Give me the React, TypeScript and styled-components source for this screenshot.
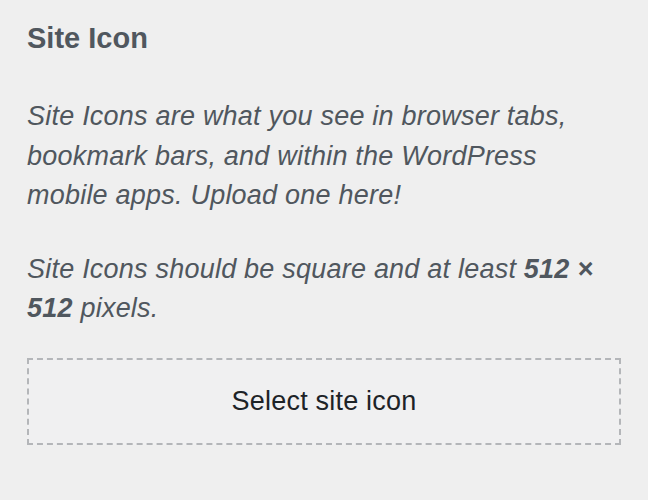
import React from "react";
import styled, { createGlobalStyle } from "styled-components";

const GlobalStyle = createGlobalStyle`
  html, body {
    margin: 0;
    padding: 0;
    background: #efefef;
  }
  body {
    font-family: "Liberation Sans", Arial, sans-serif;
  }
`;

const Panel = styled.div`
  width: 648px;
  height: 500px;
  box-sizing: border-box;
  padding: 18px 27px 0 27px;
  background: #efefef;
  color: #50575e;
`;

const Title = styled.h2`
  margin: 0 0 39px;
  font-size: 29px;
  line-height: 40px;
  font-weight: 700;
  color: #50575e;
`;

const Description = styled.p`
  margin: 0;
  font-size: 27px;
  line-height: 39.5px;
  letter-spacing: 0.22px;
  font-style: italic;
  color: #50575e;

  & + & {
    margin-top: 34px;
  }

  strong {
    font-weight: 700;
  }
`;

const SelectButton = styled.button`
  display: flex;
  align-items: center;
  justify-content: center;
  width: 100%;
  height: 87px;
  margin-top: 29px;
  box-sizing: border-box;
  border: 2px dashed #b4b6b9;
  background: #f0f0f1;
  color: #1d2327;
  font-family: "Liberation Sans", Arial, sans-serif;
  font-size: 27px;
  letter-spacing: 0.2px;
  cursor: pointer;
`;

const App: React.FC = () => {
  return (
    <>
      <GlobalStyle />
      <Panel>
        <Title>Site Icon</Title>
        <Description>
          Site Icons are what you see in browser tabs, bookmark bars, and
          within the WordPress mobile apps. Upload one here!
        </Description>
        <Description>
          Site Icons should be square and at least <strong>512 × 512</strong>{" "}
          pixels.
        </Description>
        <SelectButton type="button">Select site icon</SelectButton>
      </Panel>
    </>
  );
};

export default App;
